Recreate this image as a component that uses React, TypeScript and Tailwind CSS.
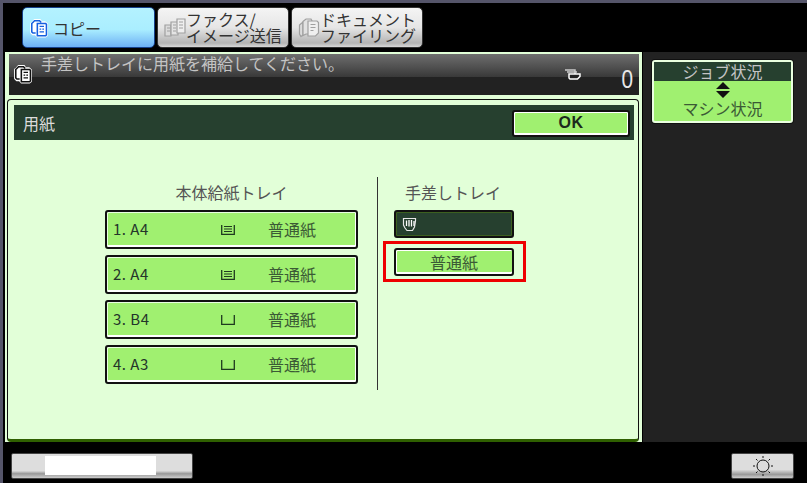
const font = { fontFamily: '"Noto Sans CJK JP", "Liberation Sans", sans-serif' };

function CopyIcon({ ink, halo }: { ink: string; halo: string }) {
  return (
    <svg width="20" height="20" viewBox="0 0 18 18" className="shrink-0">
      <path d="M3 4.500 5 2h5l1 2h3.500L16 5.500v10l-1 1H7.500L6 14.500H3.500L2 13V5z" fill={halo} stroke={halo} strokeWidth="2" strokeLinejoin="round" />
      <path d="M6 13.500H3.500L2.500 12.500V5L5 2.500h4.500L11 4" fill="none" stroke={ink} strokeWidth="1.400" />
      <path d="M7.500 5h7.500l.7.700V15.300l-.7.700H7.500z" fill={halo} stroke={ink} strokeWidth="1.400" />
      <path d="M9.500 7.500h4M9.500 10h1.500M12 10h1.500M9.500 12.500h4" stroke={ink} strokeWidth="1.200" />
    </svg>
  );
}

function FaxIcon() {
  return (
    <svg width="22" height="20" viewBox="0 0 22 20" className="shrink-0">
      <path d="M1 7h6v11H1z" fill="#dcdcdc" stroke="#a0a0a0" strokeWidth="1.200" />
      <path d="M7 4h7v13H7z" fill="#e4e4e4" stroke="#a0a0a0" strokeWidth="1.200" />
      <path d="M13 1h8v14h-8z" fill="#efefef" stroke="#a0a0a0" strokeWidth="1.200" />
      <path d="M3 10h3M3 13h3M9 7h3M9 10h3M9 13h3M15 4h4M15 7h4M15 10h4" stroke="#a0a0a0" strokeWidth="1" />
    </svg>
  );
}

function FilingIcon() {
  return (
    <svg width="22" height="20" viewBox="0 0 22 20" className="shrink-0">
      <path d="M1.500 7 5 4v13l-2 1.500L1.500 16z" fill="#dcdcdc" stroke="#a0a0a0" strokeWidth="1.200" />
      <path d="M5 3.500 8 1h5l1 2v13H8l-3 1.500z" fill="#e2e2e2" stroke="#a0a0a0" strokeWidth="1.200" />
      <path d="M10 3h9l1.500 1.500V15l-3 3H10z" fill="#efefef" stroke="#a0a0a0" strokeWidth="1.200" />
      <path d="M12.500 6.500h5M12.500 9.500h5M12.500 12.500h3" stroke="#a0a0a0" strokeWidth="1" />
    </svg>
  );
}

function HandIcon() {
  return (
    <svg width="15" height="15" viewBox="0 0 15 15" className="shrink-0">
      <path d="M1.500 1.500h12V4l-1 6-2 3.500H5L3 11 1.500 8z" fill="#26402f" stroke="#e8e8e8" strokeWidth="1.200" />
      <path d="M4.500 3.500V9M7 3v6.500M9.500 3v6.500M12 4v5" stroke="#fff" strokeWidth="1.300" />
    </svg>
  );
}

function Tab({ children, icon, active }: { children: React.ReactNode; icon: React.ReactNode; active?: boolean }) {
  return (
    <div
      className={
        active
          ? "w-[133px] h-[41px] rounded-[5px] border border-[#16418c] bg-[linear-gradient(#b4f2ff,#aaeeff_55%,#6db0f5)] flex items-center pl-[6px] gap-[4px]"
          : "w-[132px] h-[41px] rounded-[5px] border border-[#333] bg-[linear-gradient(#f4f4f4,#e6e6e6_50%,#b4b4b4_90%,#d8d8d8)] flex items-center pl-[6px]"
      }
    >
      {icon}
      {children}
    </div>
  );
}

function TrayIcon({ filled }: { filled: boolean }) {
  return (
    <svg width="14" height="12" viewBox="0 0 14 12" className="shrink-0">
      <path d="M.700 1v9.300h12.600V1" fill="none" stroke="#1f3a1f" strokeWidth="1.300" />
      {filled && <path d="M3 2.500h8M3 5h8M3 7.500h8" stroke="#1f3a1f" strokeWidth="1.200" />}
    </svg>
  );
}

function TrayRow({ label, filled }: { label: string; filled: boolean }) {
  return (
    <div className="w-[253px] h-[39px] rounded-[3px] border-2 border-[#111] bg-[#a0f070] shadow-[inset_1px_1px_0_#e8ffe0,inset_0_-2px_0_#fff,inset_-1px_0_0_#fff] flex items-center text-[#3b5a35]">
      <span className="w-[114px] pl-[6px] text-[15px] tracking-[0.5px] text-[#24352a] whitespace-pre">{label}</span>
      <TrayIcon filled={filled} />
      <span className="ml-[33px] text-[16px] -mt-[2px]">普通紙</span>
    </div>
  );
}

export default function App() {
  const rows = [
    { label: "1. A4", filled: true },
    { label: "2. A4", filled: true },
    { label: "3. B4", filled: false },
    { label: "4. A3", filled: false },
  ];

  return (
    <div style={font} className="w-[807px] h-[483px] overflow-hidden bg-black border-t-[3px] border-l-[3px] border-[#55556a] flex flex-col">
      {/* tabs */}
      <div className="h-[49px] flex items-start pt-[4px] pl-[19px] gap-[2px] shrink-0">
        <Tab active icon={<CopyIcon ink="#1560e0" halo="#fff" />}>
          <span className="text-[16px] leading-none text-[#333]">コピー</span>
        </Tab>
        <Tab icon={<FaxIcon />}>
          <span className="text-[16px] leading-[16px] text-[#333] whitespace-nowrap -mt-[1px]">ファクス/<br />イメージ送信</span>
        </Tab>
        <Tab icon={<FilingIcon />}>
          <span className="text-[16px] leading-[16px] text-[#333] whitespace-nowrap -mt-[1px]">ドキュメント<br />ファイリング</span>
        </Tab>
      </div>

      <div className="flex flex-1 min-h-0">
        {/* left column */}
        <div className="flex flex-col ml-[2px] w-[637px] h-[390px] bg-[#e2ffd8] shrink-0 mr-[1px]">
          <div className="w-[630px] h-[41px] mt-[2px] ml-[4px] bg-[linear-gradient(#6e6e6e,#3a3a3a_55%,#222_55%,#222)] flex items-start shrink-0">
            <div className="pl-[4px] pt-[10px]">
              <CopyIcon ink="#111" halo="#fff" />
            </div>
            <span className="text-[16px] leading-none mt-[1px] ml-[8px] text-[#c4c4c4]">手差しトレイに用紙を補給してください。</span>
            <div className="ml-auto mr-[5px] mt-[12px] flex items-start gap-[39px]">
              <svg width="17" height="11" viewBox="0 0 17 11" className="mt-[3px]">
                <path d="M1 1h10v5M3 3h10" fill="none" stroke="#ccc" strokeWidth="1.500" />
                <path d="M5 5h11v2.500L13.500 10H6L5 9z" fill="#222" stroke="#fff" strokeWidth="1.500" />
              </svg>
              <span className="text-[26px] leading-[26px] font-['Liberation_Sans'] text-[#e8e8e8] inline-block scale-x-[0.8]">0</span>
            </div>
          </div>

          {/* main panel */}
          <div className="h-[343px] w-[632px] mt-[4px] ml-[2px] rounded-[4px] border border-[#111] border-b-[3px] border-b-[#2f6000] bg-[#e2ffd8] shrink-0 pt-[5px] pl-[6px] pr-[4px]">
            <div className="h-[35px] bg-[#26402f] flex items-center justify-between pl-[9px] pr-[4px]">
              <span className="text-[16px] text-[#dcdcdc]">用紙</span>
              <div className="w-[118px] h-[27px] mt-[1px] rounded-[3px] border-2 border-[#111] bg-[#a0f070] shadow-[inset_1px_1px_0_#fff,inset_-1px_-2px_0_#fff] flex items-center justify-center text-[16px] font-bold font-['Liberation_Sans'] text-[#1c2a1c] tracking-[0.5px]">OK</div>
            </div>
            <div className="flex mt-[37px]">
              <div className="ml-[91px] w-[253px] flex flex-col items-center">
                <div className="text-[16px] leading-[31px] h-[33px] text-[#555]">本体給紙トレイ</div>
                <div className="flex flex-col gap-[6px]">
                  {rows.map((r) => (
                    <TrayRow key={r.label} {...r} />
                  ))}
                </div>
              </div>
              <div className="w-px h-[213px] bg-[#333] ml-[19px]" />
              <div className="flex flex-col ml-[16px]">
                <div className="text-[16px] leading-[31px] h-[33px] text-[#555] ml-[11px]">手差しトレイ</div>
                <div className="w-[120px] h-[28px] rounded-[3px] border-2 border-[#111] bg-[#26402f] shadow-[inset_0_0_0_1px_#3c6020] flex items-center pl-[6px]">
                  <HandIcon />
                </div>
                {/* red outline around selected paper type */}
                <div className="mt-[3px] -ml-[11px] w-[143px] h-[41px] border-[3px] border-[#ee0000] flex items-center justify-center">
                  <div className="w-[120px] h-[28px] -ml-[1px] rounded-[3px] border-2 border-[#111] bg-[#a0f070] shadow-[inset_1px_1px_0_#fff,inset_0_-2px_0_#fff] flex items-center justify-center text-[16px] text-[#3b5a35]">普通紙</div>
                </div>
              </div>
            </div>
          </div>
        </div>

        {/* right column */}
        <div className="flex-1 h-[390px] bg-[#222] pl-[9px] pt-[8px]">
          <div className="w-[141px] h-[63px] rounded-[3px] border-2 border-[#eaffe0] bg-[#a0f070] shadow-[0_0_0_1px_#111] flex flex-col items-center">
            <div className="w-full h-[19px] bg-[#26402f] text-[16px] leading-[19px] text-center text-[#c4c4c4] shrink-0">ジョブ状況</div>
            <svg width="16" height="16" viewBox="0 0 16 16" className="mt-[1px] shrink-0">
              <path d="M8 0l7 7H1zM1 9h14l-7 7z" fill="#111" />
            </svg>
            <div className="text-[16px] leading-[21px] text-[#3b5a35]">マシン状況</div>
          </div>
        </div>
      </div>

      {/* bottom bar */}
      <div className="h-[41px] shrink-0 flex items-start justify-between pt-[11px] pl-[8px] pr-[13px]">
        <div className="w-[182px] h-[26px] rounded-[2px] border border-[#444] bg-[linear-gradient(#ddd,#ddd_70%,#999_82%,#ccc)] flex">
          <div className="w-[111px] h-[19px] bg-white mt-[2px] ml-[33px]" />
        </div>
        <div className="w-[63px] h-[26px] rounded-[2px] border border-[#444] bg-[linear-gradient(#ddd,#ddd_65%,#999_85%,#ccc)] flex items-center justify-center">
          <svg width="22" height="22" viewBox="0 0 22 22">
            <circle cx="11" cy="11" r="6" fill="none" stroke="#111" />
            <path d="M11 1v2M11 19v2M1 11h2M19 11h2M4 4l1.500 1.500M16.500 16.500L18 18M4 18l1.500-1.500M16.500 5.500L18 4" stroke="#111" />
          </svg>
        </div>
      </div>
    </div>
  );
}
